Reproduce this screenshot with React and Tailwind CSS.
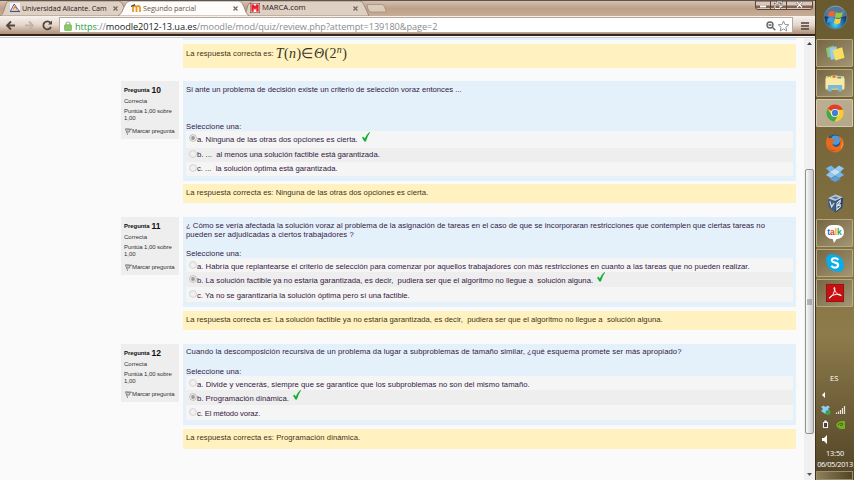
import React from "react";

const QUESTIONS = [
  {
    n: 10,
    gap: "h-[13px]",
    body: "h-[50px]",
    box: "h-[100px]",
    fb: "h-[19px] mt-[3px] pb-[3px]",
    top: "pt-[4px]",
    radio: "mt-[2px]",
    lines: [{ t: "Si ante un problema de decisión existe un criterio de selección voraz entonces ...", s: "tracking-[0px]" }],
    rows: [
      { t: "a. Ninguna de las otras dos opciones es cierta.", h: "h-[17px] pt-[1px]", s: "mt-[3px] tracking-[0.02px]", on: true },
      { t: "b. ...  al menos una solución factible está garantizada.", h: "h-[14px]", s: "mt-[2px] tracking-[-0.01px]", alt: true },
      { t: "c. ...  la solución óptima está garantizada.", h: "h-[14px]", s: "mt-[2px] tracking-[-0.02px]" },
    ],
    answer: { t: "La respuesta correcta es: Ninguna de las otras dos opciones es cierta.", s: "tracking-[0.03px]" },
  },
  {
    n: 11,
    gap: "h-[14px]",
    body: "h-[41px]",
    box: "h-[90px]",
    fb: "h-[19px] mt-[4px] pb-[3px]",
    top: "pt-[4px]",
    radio: "mt-[3px]",
    lines: [
      { t: "¿ Cómo se vería afectada la solución voraz al problema de la asignación de tareas en el caso de que se incorporaran restricciones que contemplen que ciertas tareas no", s: "tracking-[0.015px]" },
      { t: "pueden ser adjudicadas a ciertos trabajadores ?", s: "tracking-[0.08px]" },
    ],
    rows: [
      { t: "a. Habría que replantearse el criterio de selección para comenzar por aquellos trabajadores con más restricciones en cuanto a las tareas que no pueden realizar.", h: "h-[14px]", s: "mt-[4px] tracking-[0.025px]" },
      { t: "b. La solución factible ya no estaría garantizada, es decir,  pudiera ser que el algoritmo no llegue a  solución alguna.", h: "h-[15px]", s: "mt-[4px] tracking-[0.01px]", alt: true, on: true },
      { t: "c. Ya no se garantizaría la solución óptima pero sí una factible.", h: "h-[15px]", s: "mt-[4px] tracking-[-0.01px]" },
    ],
    answer: { t: "La respuesta correcta es: La solución factible ya no estaría garantizada, es decir,  pudiera ser que el algoritmo no llegue a  solución alguna.", s: "tracking-[0.01px]" },
  },
  {
    n: 12,
    gap: "h-[14px]",
    body: "h-[32px]",
    box: "h-[81px]",
    fb: "h-[20px] mt-[4px] pb-[4px]",
    top: "pt-[3px]",
    radio: "mt-[3px]",
    lines: [{ t: "Cuando la descomposición recursiva de un problema da lugar a subproblemas de tamaño similar, ¿qué esquema promete ser más apropiado?", s: "tracking-[0.07px]" }],
    rows: [
      { t: "a. Divide y vencerás, siempre que se garantice que los subproblemas no son del mismo tamaño.", h: "h-[14px]", s: "mt-[4px] tracking-[0.035px]" },
      { t: "b. Programación dinámica.", h: "h-[15px]", s: "mt-[4px] tracking-[0.02px]", alt: true, on: true },
      { t: "c. El método voraz.", h: "h-[15px]", s: "mt-[4px] tracking-[-0.14px]" },
    ],
    answer: { t: "La respuesta correcta es: Programación dinámica.", s: "tracking-[0.05px]" },
  },
];

function Radio({ on, top }) {
  return (
    <svg className={`${top} ml-[2px] size-[8px] shrink-0`} viewBox="0 0 8 8">
      <circle cx="4" cy="4" r="3.4" fill="#f1f1f1" stroke={on ? "#b3b3b3" : "#cccccc"} strokeWidth=".8" />
      {on && <circle cx="4" cy="4" r="1.9" fill="#999999" />}
    </svg>
  );
}

function Check() {
  return (
    <svg className="ml-[4px] h-[10px] w-[8px] shrink-0" viewBox="0 0 8 10">
      <path d="M0 5.6 1.5 4.7 2.8 6.5Q4.600 2.400 7.400 0L8 .500Q5.400 4 3.900 9.400L2.300 9.500Z" fill="#12b034" />
    </svg>
  );
}

function Question({ q }) {
  return (
    <section>
      <div className={q.gap} />
      <div className="flex items-start gap-[4px]">
        <aside className="h-[58px] w-[58px] shrink-0 bg-[#eeeeee] pl-[3px] text-[6px] leading-[7px] whitespace-nowrap text-[#333]">
          <div className="flex h-[16px] items-center gap-[2px] pt-[2px] font-bold text-[#111]">
            <span className="text-[6px] tracking-[-0.05px]">Pregunta</span>
            <span className="text-[8.5px]">{q.n}</span>
          </div>
          <div className="h-[11px] pt-[1px]">Correcta</div>
          <div className="tracking-[-0.08px]">Puntúa 1,00 sobre</div>
          <div>1,00</div>
          <div className="mt-[6px] flex items-center">
            <svg className="ml-[1px] size-[7px]" viewBox="0 0 7 7" fill="none" stroke="#666" strokeWidth=".8">
              <path d="M.5 .8 6.5 1.2 4.6 2.6 4.3 4.2 2 3.7M.5 .8 2.6 6.8M2 1.8H4.5" />
            </svg>
            <span className="tracking-[-0.1px]">Marcar pregunta</span>
          </div>
        </aside>
        <div className="w-[613px] text-[7.7px] leading-[9px] whitespace-pre text-[#33203f]">
          <div className={`${q.box} bg-[#e4f1fb] px-[3px]`}>
            <div className={`${q.body} ${q.top} flex flex-col`}>
              {q.lines.map((l) => (
                <div key={l.t} className={`${l.s} h-[8.5px]`}>{l.t}</div>
              ))}
              <div className="mt-auto h-[8px] leading-[8px] tracking-[0.04px]">Seleccione una:</div>
            </div>
            {q.rows.map((r) => (
              <div key={r.t} className={`${r.h} flex items-start pl-[1px] ${r.alt ? "bg-[#eeeeee]" : "bg-[#f5f5f5]"}`}>
                <Radio on={r.on} top={q.radio} />
                <div className={r.s}>{r.t}</div>
                {r.on && <Check />}
              </div>
            ))}
          </div>
          <div className={`${q.fb} flex items-center bg-[#fff2c0] px-[3px] text-[#453216]`}>
            <div className={q.answer.s}>{q.answer.t}</div>
          </div>
        </div>
      </div>
    </section>
  );
}

function Cross() {
  return (
    <svg className="size-[5px] shrink-0" viewBox="0 0 5 5" stroke="#74675f" strokeWidth="1.2">
      <path d="M.5 .5 4.5 4.5M4.5 .5 .5 4.5" />
    </svg>
  );
}

function TabStrip() {
  return (
    <div className="relative h-[16px] border-t border-[#5c5451] bg-linear-to-b from-[#d5c0ae] via-[#bda088] to-[#c7ad97]">
      <svg className="absolute top-0 left-0 h-[15px] w-[400px]" viewBox="0 0 400 15">
        <path d="M0 15Q3 14 5 6Q6 0 9 0H119Q122 0 124 6L128 15Z" fill="#dfd0c4" stroke="#8f7d70" strokeWidth=".8" />
        <path d="M244 15Q247 10 248 4Q250 0 254 0H360Q363 0 365 6L369 15Z" fill="#dfd0c4" stroke="#8f7d70" strokeWidth=".8" />
        <path d="M118 15Q122 13 124 6Q126 0 130 0H239Q242 0 244 6Q246 13 249 15Z" fill="#fefcfb" stroke="#8f7d70" strokeWidth=".8" />
        <path d="M367 3.5H382Q384 3.5 385 7L386.500 11H371Q369 11 368 8Z" fill="#dccabb" stroke="#a58e7c" strokeWidth=".8" />
      </svg>
      <div className="relative flex h-[14px] items-center text-[7.7px] whitespace-nowrap text-[#2b211c]">
        <svg className="ml-[10px] size-[10px] shrink-0" viewBox="0 0 10 10">
          <rect width="10" height="10" fill="#f6f4f2" />
          <path d="M.5 8 4.200 1 9 8" fill="none" stroke="#3a67ad" />
          <path d="M3 6.5 5 3.5 7 6.500" fill="none" stroke="#f06a2a" strokeWidth="1.200" />
          <path d="M0 8.500H10" stroke="#40558c" strokeWidth="1.500" />
          <path d="M3.500 7H6.500" stroke="#f3c82b" strokeWidth="1.200" />
        </svg>
        <span className="ml-[2px] w-[86px] font-['Open_Sans',sans-serif] text-[7.2px] font-medium tracking-[-0.12px]">Universidad Alicante. Cam</span>
        <span className="ml-[5px] flex"><Cross /></span>
        <svg className="ml-[13px] h-[8px] w-[10px] shrink-0" viewBox="0 0 10 8" fill="none" stroke="#e59a2b" strokeWidth="1.800">
          <path d="M2 8V3.500Q2 2 3.500 2T5.500 3.500V8M5.500 4Q5.500 2 7.200 2T9 4V8" />
          <path d="M0 2.500 4 .600" stroke="#424242" strokeWidth="1.200" />
        </svg>
        <span className="ml-[2px] w-[90px] font-['Open_Sans',sans-serif] text-[7.3px] tracking-[-0.1px] text-[#6f5548]">Segundo parcial</span>
        <span className="flex"><Cross /></span>
        <svg className="ml-[12px] size-[10px] shrink-0" viewBox="0 0 10 10">
          <rect width="10" height="10" fill="#4d1111" />
          <rect x=".5" y=".5" width="9" height="9" fill="#fff" />
          <path d="M1.500 1.500H3.500L5 3.500 6.500 1.500H8.500V8.500H6.500V5L5 6.500 3.500 5V8.500H1.500Z" fill="#ee1c24" stroke="#ee1c24" strokeWidth=".4" />
        </svg>
        <span className="ml-[2px] w-[91px] font-['Open_Sans',sans-serif]">MARCA.com</span>
        <span className="flex"><Cross /></span>
        <svg className="ml-auto mr-[2px] mb-[5px] h-[9px] w-[58px]" viewBox="0 0 58 9">
          <path d="M.5 0V6Q.5 8.500 3 8.500H55Q57.500 8.500 57.500 6V0Z" fill="#d8c7ba" stroke="#5a4639" />
          <path d="M1 4.500H57V7H1Z" fill="#80634e" />
          <path d="M15.500 0V8M31.500 0V8" stroke="#5a4639" />
          <path d="M5 5.500H11" stroke="#fff" strokeWidth="1.800" />
          <path d="M20 3H25V7.500H20ZM22 3V1H27V5.500H25" fill="none" stroke="#6d5a4e" strokeWidth="2" />
          <path d="M20 3H25V7.500H20ZM22 3V1H27V5.500H25" fill="none" stroke="#f8f4f0" />
          <path d="M42 1 47 6.500M47 1 42 6.500" stroke="#6d5a4e" strokeWidth="2.600" />
          <path d="M42 1 47 6.500M47 1 42 6.500" stroke="#f8f4f0" strokeWidth="1.400" />
        </svg>
      </div>
    </div>
  );
}

function Toolbar() {
  return (
    <div className="flex h-[22px] border-b-[1px] border-[#c9c9c9] bg-[#fafafa]">
      <div className="flex h-[20px] w-full items-center border-b-2 border-[#33251b] bg-linear-to-b from-[#f7f2ee] via-[#e4d6ca] to-[#ad8e75]">
        <svg className="h-[18px] w-[59px] shrink-0" viewBox="0 0 59 18" fill="none" stroke="#50483f" strokeWidth="1.800">
          <path d="M15 9.500H7.500M11 5.500 7 9.500 11 13.500" />
          <path d="M25 9.500H32.500M29 5.500 33 9.500 29 13.500" stroke="#c0b3a9" />
          <path d="M50.500 6.800A4 4 0 1 0 51 11" />
          <path d="M52 4.500V8.500H48Z" fill="#50483f" stroke="none" />
        </svg>
        <div className="flex h-[16px] w-[734px] items-center border border-[#b7a89d] bg-white">
          <svg className="mt-[1px] ml-[4px] h-[10px] w-[8px]" viewBox="0 0 8 10">
            <path d="M2 4V2.500Q2 1 4 1T6 2.500V4" fill="none" stroke="#a5aaa3" strokeWidth="1.200" />
            <rect x=".5" y="3.800" width="7" height="5.700" rx=".7" fill="#87cb66" stroke="#65a94a" strokeWidth=".6" />
          </svg>
          <span className="mt-[2px] ml-[3px] font-['Open_Sans',sans-serif] text-[9.2px] leading-[13px] tracking-[-0.07px] whitespace-nowrap text-[#8b8b8b]">
            <span className="text-[#2b9c3a]">https</span>://<span className="text-[#222]">moodle2012-13.ua.es</span>/moodle/mod/quiz/review.php?attempt=139180&amp;page=2
          </span>
          <svg className="mt-[2px] ml-auto mr-[1px] h-[12px] w-[25px]" viewBox="0 0 25 12" fill="none">
            <circle cx="4" cy="5" r="3" stroke="#666" strokeWidth="1.400" />
            <path d="M2.500 5H5.500M6.300 7.300 9.300 10.300" stroke="#666" strokeWidth="1.400" />
            <path d="m17.500 1 1.500 3.500 3.800.3-2.900 2.500.9 3.700-3.300-2-3.300 2 .9-3.700-2.900-2.500 3.800-.3Z" stroke="#949494" />
          </svg>
        </div>
        <svg className="mt-[2px] ml-[8px] h-[10px] w-[8px]" viewBox="0 0 8 10" stroke="#4a423d" strokeWidth="1.700">
          <path d="M0 2H8M0 5H8M0 8H8" />
        </svg>
      </div>
    </div>
  );
}

function Scrollbar() {
  return (
    <div className="flex w-[11px] shrink-0 flex-col items-center bg-[#f0f0f0]">
      <svg className="mt-[4px] h-[3px] w-[5px]" viewBox="0 0 5 3"><path d="M0 3 2.500 0 5 3Z" fill="#444" /></svg>
      <div className="mt-[124px] flex h-[265px] w-[9px] shrink-0 items-center justify-center rounded-[2px] border border-[#929292] bg-linear-to-r from-[#f8f8f8] to-[#c9cace]">
        <svg className="h-[6px] w-[5px]" viewBox="0 0 5 6" stroke="#666" strokeWidth=".8"><path d="M0 1H5M0 3H5M0 5H5" /></svg>
      </div>
      <svg className="mt-auto mb-[4px] h-[3px] w-[5px]" viewBox="0 0 5 3"><path d="M0 0 2.500 3 5 0Z" fill="#555" /></svg>
    </div>
  );
}

const ICONS = {
  notes: (
    <g>
      <path d="M1 5 9 2 13 12 3 15Z" fill="#83c983" />
      <path d="M5 5 12 3 14 16 6 17Z" fill="#9ac7ee" />
      <path d="M8 7 18 4 20.500 15 11 18Z" fill="#f8df62" />
    </g>
  ),
  folder: (
    <g>
      <path d="M1 3H6L7 2H13V3H20V17H1Z" fill="#f1d77d" />
      <path d="M.5 5H20.500V16H.5Z" fill="#fae9a5" />
      <path d="M3 2.500H6" stroke="#38a85a" strokeWidth="1.400" />
      <path d="M8 3.500H11" stroke="#d9492f" strokeWidth="1.400" />
      <path d="M13 4.500H17" stroke="#378ad2" strokeWidth="1.400" />
      <path d="M3 19V13Q3 12 4 12H17Q18 12 18 13V19H14V16H7V19Z" fill="#79bad9" />
    </g>
  ),
  chrome: (
    <g>
      <circle cx="10.500" cy="10" r="9" fill="#f7ce2c" />
      <path d="M10.500 10 2.700 5.500A9 9 0 0 1 18.800 6.500H10.500Z" fill="#df3d30" />
      <path d="M2.700 5.500A9 9 0 0 0 10 19L14 12 10.500 10 7 12Z" fill="#41a84b" />
      <circle cx="10.500" cy="10" r="4.300" fill="#f2f2ee" />
      <circle cx="10.500" cy="10" r="3.300" fill="#4480cf" />
    </g>
  ),
  firefox: (
    <g>
      <circle cx="10.500" cy="10" r="9" fill="#244f91" />
      <circle cx="11" cy="7" r="5" fill="#5597cf" />
      <path d="M1.500 6 3 3 4 5Q7 4 8 6L11 8 8 9Q7 13 11 14 16 14 16 9 16 5 14 2 20 5 20 11 18 20 10 20 1 18 1 10Z" fill="#e66b1e" />
      <path d="M17 5Q21 12 16 16 20 9 17 5" fill="#fbbf3b" />
      <path d="M2 11Q5 18 12 18 6 20 2 11" fill="#bd371c" />
    </g>
  ),
  dropbox: (
    <g fill="#72b7ee">
      <path d="M1 5 6.500 2 10.500 5.500 5 9Z" />
      <path d="M10.500 5.500 14.500 2 20 5 16 9Z" fill="#91caf4" />
      <path d="M1 12 5 9 10.500 12.500 6.500 15.500Z" fill="#8dc7f3" />
      <path d="M10.500 12.500 16 9 20 12 14.500 15.500Z" />
      <path d="M5 15.500 6.500 16 10.500 13 14.500 16 16 15.500V16.500L10.500 19.500 5 16.500Z" fill="#5b9ed8" />
      <path d="M5 9 10.500 5.500 16 9 10.500 12.500Z" fill="#c2e1f6" />
    </g>
  ),
  vbox: (
    <g>
      <path d="M3 5 11 1 19 4 18 15 11 20 4 15Z" fill="#425d82" />
      <path d="M3 5 11 1 19 4 11 8Z" fill="#bdcada" />
      <path d="M11 8 19 4 18 15 11 20Z" fill="#2c4568" />
      <path d="M5 8 7 14 9.500 10M12.500 10V17L16 14V12L13 13 16 9V7L12.500 10" fill="none" stroke="#dce6f2" strokeWidth="1.200" />
      <path d="M7 4.500 11 3 15 4.500 11 6Z" fill="#6280a4" />
    </g>
  ),
  skype: (
    <g fill="#08aee9">
      <circle cx="7" cy="6.500" r="6" />
      <circle cx="14" cy="13.500" r="6" />
      <circle cx="10.500" cy="10" r="8.500" />
      <path d="M14 6.700Q12.500 4.700 10 5 7 5.300 7.200 7.300 7.500 9 10.500 9.600 14 10.300 13.800 12.400 13.500 14.700 10.600 14.800 8 15 6.700 12.800" fill="none" stroke="#fff" strokeWidth="2.200" />
    </g>
  ),
  adobe: (
    <g>
      <rect x="1.500" y="1" width="18" height="18" fill="#c90e12" stroke="#8e1513" />
      <path d="M5 15.500Q9 12 10.300 7 10.600 3.600 9.700 4 8.600 5 11 9 13.500 12.500 17 12.800 17.200 11 12.500 11.300 8 11.700 4.800 14.500 4 15.800 5 15.500" fill="none" stroke="#fff" />
    </g>
  ),
};

function Taskbar() {
  const items = [["notes", 1], ["folder", 1], ["chrome", 2], ["firefox", 0], ["dropbox", 0], ["vbox", 0], ["talk", 1], ["skype", 1], ["adobe", 1]];
  const frames = [
    "border-transparent",
    "border-[#b6aa83] bg-linear-to-br from-[#766644] to-[#a49672]",
    "border-[#d2c9af] bg-linear-to-br from-[#bdaf92] to-[#b3a78a]",
  ];
  return (
    <div className="flex h-[480px] w-[39px] shrink-0 flex-col border-l border-[#403719] bg-linear-to-b from-[#68592f] via-[#8e7b4b] via-70% to-[#514326]">
      <svg className="mx-auto mt-[5px] mb-[9px] size-[25px] shrink-0" viewBox="0 0 25 25">
        <defs>
          <radialGradient id="orb" cy=".8">
            <stop stopColor="#48d9f4" /><stop offset=".6" stopColor="#2470a9" /><stop offset="1" stopColor="#173d68" />
          </radialGradient>
        </defs>
        <circle cx="12.500" cy="12.500" r="11.500" fill="url(#orb)" stroke="#5b8194" />
        <path d="M2 11A10.500 10.500 0 0 1 23 11Q12 14 2 11Z" fill="#b6d3e1" opacity=".4" />
        <path d="M6 7Q9 5 12 7L11 12Q8 10 5 12Z" fill="#ed6630" />
        <path d="M13 7Q16 9 20 7L18.500 12Q15 14 12 12Z" fill="#9ac73f" />
        <path d="M5 13Q8 11 11 13L10 18Q7 16 4 18Z" fill="#3e9cdd" />
        <path d="M12 13Q15 15 18 13L17 18Q14 20 11 18Z" fill="#fccd3b" />
      </svg>
      <div className="flex flex-col gap-[2px]">
        {items.map(([id, frame]) => (
          <div key={id} className={`flex h-[28px] w-[37px] items-center justify-center rounded-[1px] border ${frames[frame]}`}>
            {id === "talk" ? (
              <div className="relative mb-[3px] flex h-[14px] w-[19px] items-center justify-center rounded-full bg-white text-[8.5px] leading-[8px] font-bold tracking-[-0.1px]">
                <svg className="absolute top-[12px] left-[7px] h-[6px] w-[6px]" viewBox="0 0 6 6"><path d="M0 0H6L2 6Z" fill="#fff" /></svg>
                <span className="text-[#2c65c3]">t</span><span className="text-[#dc382b]">a</span><span className="text-[#e7ae20]">l</span><span className="text-[#35a350]">k</span>
              </div>
            ) : (
              <svg className="size-[20px]" viewBox="0 0 21 20">{ICONS[id]}</svg>
            )}
          </div>
        ))}
      </div>
      <div className="mt-[65px] pl-[14px] font-['Open_Sans',sans-serif] text-[7.500px] leading-[12px] text-white">ES</div>
      <svg className="mt-[3px] h-[62px] w-[38px] shrink-0" viewBox="0 0 38 62">
        <path d="M6 8 9 5V11Z" fill="#fff" />
        <path d="M5 20 7.500 18.500 9.500 20 11.500 18.500 14 20 12 22 14 24 9.500 27 5 24 7 22Z" fill="#8ccdf1" />
        <circle cx="12" cy="25.500" r="2.500" fill="#36a54b" />
        <path d="M20.500 27V25.500M22.500 27V24.500M24.500 27V23M26.500 27V21M28.500 27V19" stroke="#e8e6df" strokeWidth="1.200" />
        <path d="M8 33H11V34.500H12.500V41.500H6.500V34.500H8Z" fill="#f0efe7" stroke="#494432" strokeWidth=".7" />
        <path d="M8 36H11V40H8Z" fill="#494432" />
        <path d="M20 38Q22 34 26 34H29V42H25Q22 42 20 38Z" fill="#75ad22" />
        <path d="M22 38Q24 35 27 37 25 40 24 38" fill="none" stroke="#31540f" strokeWidth=".8" />
        <path d="M6 51H8L11 48V57L8 54H6Z" fill="#fff" />
      </svg>
      <div className="-mt-[1px] text-center font-['Open_Sans',sans-serif] text-[7.300px] leading-[11px] tracking-[-0.1px] whitespace-nowrap text-white">
        <div>13:50</div>
        <div className="tracking-[-0.3px]">06/05/2013</div>
      </div>
      <div className="mt-auto h-[9px] w-[37px] border border-[#9b8e69] bg-linear-to-r from-[#8d815e] to-[#514525]" />
    </div>
  );
}

export default function App() {
  return (
    <div className="flex h-[480px] w-[854px] overflow-hidden bg-[#fafafa] font-['Liberation_Sans',Arial,sans-serif]">
      <div className="flex w-[815px] shrink-0 flex-col">
        <TabStrip />
        <Toolbar />
        <div className="flex h-[442px]">
          <main className="w-[804px] shrink-0 pl-[121px]">
            <div className="ml-[62px] h-[2px] w-[613px] bg-[#e4f1fb]" />
            <div className="mt-[4px] ml-[62px] flex h-[24px] w-[613px] items-center bg-[#fff2c0] pl-[3px] text-[7.700px] whitespace-nowrap text-[#453216]">
              <span className="mb-[4px] tracking-[0.04px]">La respuesta correcta es:</span>
              <span className="mb-[4px] ml-[2px] font-['Liberation_Serif',serif] text-[14px] leading-[16px] tracking-[0.4px] text-[#393528]">
                <i>T</i>(<i>n</i>)∈<i>Θ</i>(2<sup className="text-[10px] italic">n</sup>)
              </span>
            </div>
            {QUESTIONS.map((q) => <Question key={q.n} q={q} />)}
          </main>
          <Scrollbar />
        </div>
      </div>
      <Taskbar />
    </div>
  );
}
